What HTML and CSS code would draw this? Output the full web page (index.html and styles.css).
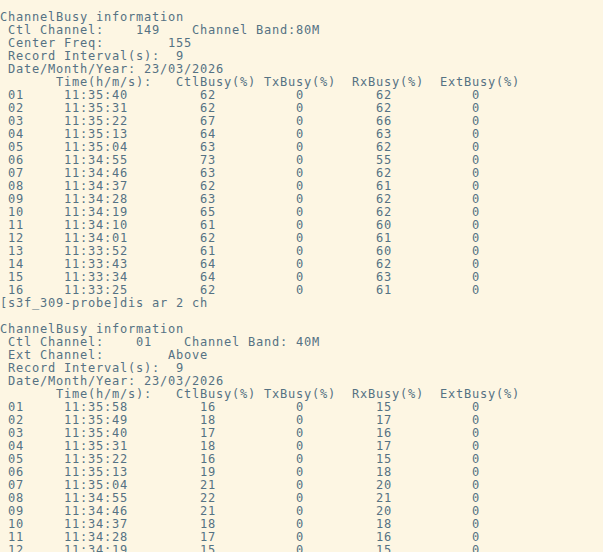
FILE: index.html
```html
<!DOCTYPE html>
<html>
<head>
<meta charset="utf-8">
<link rel="stylesheet" href="styles.css">
</head>
<body>
<pre class="term">
ChannelBusy information
 Ctl Channel:    149    Channel Band:80M
 Center Freq:        155
 Record Interval(s):  9
 Date/Month/Year: 23/03/2026
       Time(h/m/s):   CtlBusy(%) TxBusy(%)  RxBusy(%)  ExtBusy(%)
 01     11:35:40         62          0         62          0
 02     11:35:31         62          0         62          0
 03     11:35:22         67          0         66          0
 04     11:35:13         64          0         63          0
 05     11:35:04         63          0         62          0
 06     11:34:55         73          0         55          0
 07     11:34:46         63          0         62          0
 08     11:34:37         62          0         61          0
 09     11:34:28         63          0         62          0
 10     11:34:19         65          0         62          0
 11     11:34:10         61          0         60          0
 12     11:34:01         62          0         61          0
 13     11:33:52         61          0         60          0
 14     11:33:43         64          0         62          0
 15     11:33:34         64          0         63          0
 16     11:33:25         62          0         61          0
[s3f_309-probe]dis ar 2 ch

ChannelBusy information
 Ctl Channel:    01    Channel Band: 40M
 Ext Channel:        Above
 Record Interval(s):  9
 Date/Month/Year: 23/03/2026
       Time(h/m/s):   CtlBusy(%) TxBusy(%)  RxBusy(%)  ExtBusy(%)
 01     11:35:58         16          0         15          0
 02     11:35:49         18          0         17          0
 03     11:35:40         17          0         16          0
 04     11:35:31         18          0         17          0
 05     11:35:22         16          0         15          0
 06     11:35:13         19          0         18          0
 07     11:35:04         21          0         20          0
 08     11:34:55         22          0         21          0
 09     11:34:46         21          0         20          0
 10     11:34:37         18          0         18          0
 11     11:34:28         17          0         16          0
 12     11:34:19         15          0         15          0
</pre>
</body>
</html>
```
FILE: styles.css
```css
html, body {
  margin: 0;
  padding: 0;
  background: #fdf6e3;
  overflow: hidden;
}
.term {
  margin: 0;
  padding: 11px 0 0 0;
  font-family: "DejaVu Sans Mono", monospace;
  font-size: 12px;
  letter-spacing: 0.775px;
  line-height: 13px;
  color: #557283;
  white-space: pre;
}
```
